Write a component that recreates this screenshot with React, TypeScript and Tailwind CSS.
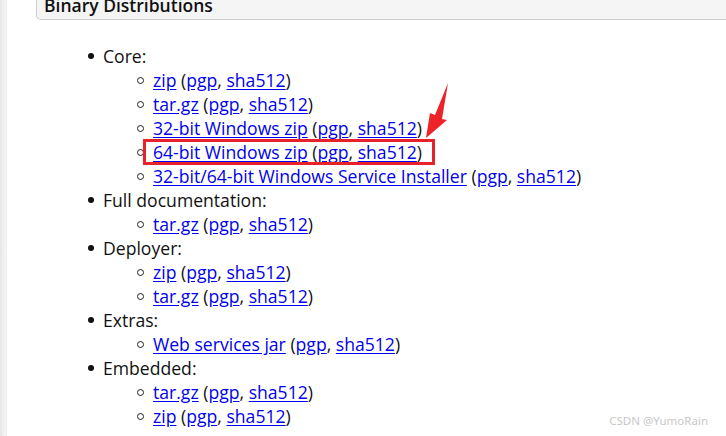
import React from "react";

type Sub = { label: string; boxed?: boolean };
type Group = { title: string; items: Sub[] };

const groups: Group[] = [
  {
    title: "Core:",
    items: [
      { label: "zip" },
      { label: "tar.gz" },
      { label: "32-bit Windows zip" },
      { label: "64-bit Windows zip", boxed: true },
      { label: "32-bit/64-bit Windows Service Installer" },
    ],
  },
  { title: "Full documentation:", items: [{ label: "tar.gz" }] },
  { title: "Deployer:", items: [{ label: "zip" }, { label: "tar.gz" }] },
  { title: "Extras:", items: [{ label: "Web services jar" }] },
  { title: "Embedded:", items: [{ label: "tar.gz" }, { label: "zip" }] },
];

const Link = ({ children }: { children: React.ReactNode }) => (
  <a href="#" className="text-[#0000ee] underline underline-offset-2">
    {children}
  </a>
);

const Entry = ({ item }: { item: Sub }) => {
  const content = (
    <span className="whitespace-pre">
      <Link>{item.label}</Link> (<Link>pgp</Link>, <Link>sha512</Link>)
    </span>
  );
  return (
    <li className="flex items-center h-6">
      <span className="shrink-0 w-[7px] h-[7px] rounded-full border-[1.5px] border-[#222] mr-[9px] ml-[-16px]" />
      {item.boxed ? (
        <span className="relative">
          <span className="absolute -left-[10px] -right-[13px] -top-[1px] -bottom-[1px] border-[3px] border-[#e8222a]" />
          {content}
        </span>
      ) : (
        content
      )}
    </li>
  );
};

export default function App() {
  return (
    <div
      className="relative w-[726px] h-[436px] overflow-hidden bg-white text-[#111] flex"
      style={{ fontFamily: '"Open Sans", "Noto Sans", sans-serif' }}
    >
      <div className="w-[7px] h-full bg-gradient-to-r from-[#e6e6e6] to-[#f7f7f7] border-r border-[#ececec]" />
      <div className="flex-1 pl-[29px]">
        <div className="-mt-[9px] h-[29px] bg-[#f5f5f5] border-l border-b border-[#cccccc] rounded-bl-[5px] pl-[7px] flex items-end">
          <span className="text-[17.5px] font-semibold leading-[24px] pb-[2px] text-[#111]">
            Binary Distributions
          </span>
        </div>
        <ul className="mt-[24px] pl-[67px] text-[17.6px] leading-6">
          {groups.map((g) => (
            <li key={g.title}>
              <div className="flex items-center h-6">
                <span className="shrink-0 w-[6px] h-[6px] rounded-full bg-[#111] ml-[-15px] mr-[9px]" />
                {g.title}
              </div>
              <ul className="pl-[50px]">
                {g.items.map((it, i) => (
                  <Entry key={i} item={it} />
                ))}
              </ul>
            </li>
          ))}
        </ul>
      </div>
      <svg className="absolute left-[418px] top-[80px]" width="36" height="62" viewBox="0 0 36 62">
        <path d="M30 3 L24 39 L29 40 L8 58 L12 33 L17 35 Z" fill="#ee2229" />
      </svg>
      <span
        className="absolute right-[18px] bottom-[7px] text-[11.5px] text-[#c8c8c8]"
        style={{ fontFamily: '"Noto Sans", sans-serif' }}
      >
        CSDN @YumoRain
      </span>
    </div>
  );
}
